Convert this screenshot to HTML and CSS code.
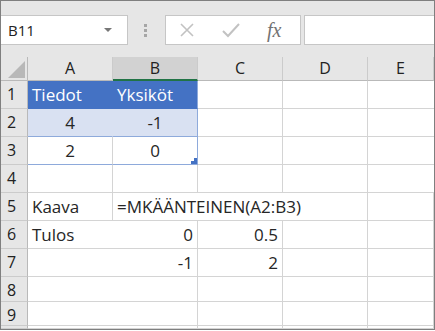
FILE: index.html
```html
<!DOCTYPE html>
<html lang="fi">
<head>
  <meta charset="UTF-8">
  <title>MKÄÄNTEINEN</title>
  <link rel="stylesheet" href="styles.css">
</head>
<body>
  <div class="app">
    <div class="toolbar">
      <div class="namebox">
        <span>B11</span>
        <span class="arrow"></span>
      </div>
      <div class="dots"><i></i><i></i><i></i></div>
      <div class="fbtns">
        <svg class="ico" width="16" height="16" viewBox="0 0 16 16">
          <path d="M2 2 L14 14 M14 2 L2 14" stroke="#c2c2c2" stroke-width="1.6" fill="none"/>
        </svg>
        <svg class="ico" width="18" height="16" viewBox="0 0 18 16">
          <path d="M1 9 L6 14 L17 2" stroke="#c2c2c2" stroke-width="2" fill="none"/>
        </svg>
        <span class="fx">fx</span>
      </div>
      <div class="fbar"></div>
    </div>

    <div class="sheet">
      <div class="hd corner">
        <svg width="18" height="17" viewBox="0 0 18 17"><polygon points="17,0 17,17 0,17" fill="#b8b8b8"/></svg>
      </div>
      <div class="hd">A</div>
      <div class="hd sel">B</div>
      <div class="hd">C</div>
      <div class="hd">D</div>
      <div class="hd">E</div>

      <div class="rh">1</div>
      <div class="c th">Tiedot</div>
      <div class="c th tr">Yksiköt</div>
      <div class="c"></div>
      <div class="c"></div>
      <div class="c"></div>

      <div class="rh">2</div>
      <div class="c band ctr">4</div>
      <div class="c band tr tb ctr">-1</div>
      <div class="c"></div>
      <div class="c"></div>
      <div class="c"></div>

      <div class="rh">3</div>
      <div class="c tb ctr">2</div>
      <div class="c tr tb ctr">0<span class="handle"></span></div>
      <div class="c"></div>
      <div class="c"></div>
      <div class="c"></div>

      <div class="rh">4</div>
      <div class="c"></div>
      <div class="c"></div>
      <div class="c"></div>
      <div class="c"></div>
      <div class="c"></div>

      <div class="rh">5</div>
      <div class="c">Kaava</div>
      <div class="c span3">=MKÄÄNTEINEN(A2:B3)</div>
      <div class="c"></div>

      <div class="rh">6</div>
      <div class="c">Tulos</div>
      <div class="c num">0</div>
      <div class="c num">0.5</div>
      <div class="c"></div>
      <div class="c"></div>

      <div class="rh">7</div>
      <div class="c"></div>
      <div class="c num">-1</div>
      <div class="c num">2</div>
      <div class="c"></div>
      <div class="c"></div>

      <div class="rh">8</div>
      <div class="c"></div>
      <div class="c"></div>
      <div class="c"></div>
      <div class="c"></div>
      <div class="c"></div>

      <div class="rh">9</div>
      <div class="c"></div>
      <div class="c"></div>
      <div class="c"></div>
      <div class="c"></div>
      <div class="c"></div>

      <div class="rh"></div>
      <div class="c"></div>
      <div class="c"></div>
      <div class="c"></div>
      <div class="c"></div>
      <div class="c"></div>
    </div>
  </div>
</body>
</html>
```

FILE: styles.css
```css
* { margin: 0; padding: 0; box-sizing: border-box; }
body {
  font-family: 'Open Sans', sans-serif;
  background: #fff;
  color: #222;
}
.app {
  width: 435px;
  height: 330px;
  border: 1px solid #7f7f7f;
  overflow: hidden;
  display: flex;
  flex-direction: column;
}

/* toolbar */
.toolbar {
  height: 56px;
  flex: none;
  background: #e6e6e6;
  display: flex;
  align-items: flex-start;
  padding-top: 14px;
}
.namebox {
  width: 127px;
  height: 30px;
  background: #fff;
  border: 1px solid #c6c6c6;
  border-left: none;
  display: flex;
  align-items: center;
  justify-content: space-between;
  padding: 0 15px 0 7px;
  font-size: 15px;
  color: #222;
}
.arrow {
  width: 0;
  height: 0;
  border-left: 4px solid transparent;
  border-right: 4px solid transparent;
  border-top: 4px solid #777;
}
.dots {
  margin-left: 16px;
  height: 30px;
  display: flex;
  flex-direction: column;
  justify-content: center;
  gap: 2px;
}
.dots i {
  display: block;
  width: 3px;
  height: 3px;
  background: #a6a6a6;
}
.fbtns {
  margin-left: 18px;
  width: 136px;
  height: 30px;
  background: #fff;
  border: 1px solid #c6c6c6;
  display: flex;
  align-items: center;
  padding-left: 13px;
}
.fbtns .ico { flex: none; }
.fbtns .ico + .ico { margin-left: 27px; }
.fx {
  margin-left: 27px;
  font-family: 'Liberation Serif', serif;
  font-style: italic;
  font-size: 20px;
  line-height: 20px;
  color: #737373;
}
.fbar {
  margin-left: 3px;
  flex: 1;
  height: 30px;
  background: #fff;
  border: 1px solid #c6c6c6;
  border-right: none;
}

/* sheet */
.sheet {
  flex: 1;
  display: grid;
  grid-template-columns: 27px 85px 85px 85px 85px 1fr;
  grid-template-rows: 24px repeat(7, 28px) 25px 24px 1fr;
  overflow: hidden;
}
.hd {
  background: #e6e6e6;
  border-right: 1px solid #cbcbcb;
  border-bottom: 1px solid #b9b9b9;
  font-size: 16px;
  line-height: 23px;
  text-align: center;
  color: #222;
}
.hd:last-child { border-right: none; }
.hd.corner {
  border-right-color: #b9b9b9;
  display: flex;
  align-items: flex-end;
  padding: 0 0 2px 7px;
}
.hd.sel {
  background: #d2d2d2;
  border-bottom: 2px solid #217346;
  line-height: 22px;
}
.rh {
  background: #e6e6e6;
  border-right: 1px solid #b9b9b9;
  border-bottom: 1px solid #cbcbcb;
  font-size: 16px;
  line-height: 27px;
  padding-left: 6px;
  color: #222;
}
.c {
  border-right: 1px solid #d4d4d4;
  border-bottom: 1px solid #d4d4d4;
  font-size: 17px;
  line-height: 27px;
  padding: 0 4px;
  white-space: nowrap;
  color: #262626;
  position: relative;
}
.c:nth-child(6n) { border-right: none; }
.c.th {
  background: #4472c4;
  color: #fff;
  border-right-color: #4472c4;
  border-bottom-color: #4472c4;
}
.c.band {
  background: #d9e1f2;
  border-right-color: #d9e1f2;
  border-bottom-color: #8eaadb;
}
.c.tr { border-right-color: #8eaadb; }
.c.tb { border-bottom-color: #8eaadb; }
.c.ctr { text-align: center; }
.c.num { text-align: right; }
.c.span3 { grid-column: span 3; }

/* fill handle on B3 */
.handle {
  position: absolute;
  right: 0;
  bottom: 0;
  width: 6px;
  height: 6px;
  background:
    linear-gradient(to right, transparent 3px, #4472c4 3px) top / 6px 3px no-repeat,
    linear-gradient(#4472c4, #4472c4) bottom / 6px 3px no-repeat;
}
```
